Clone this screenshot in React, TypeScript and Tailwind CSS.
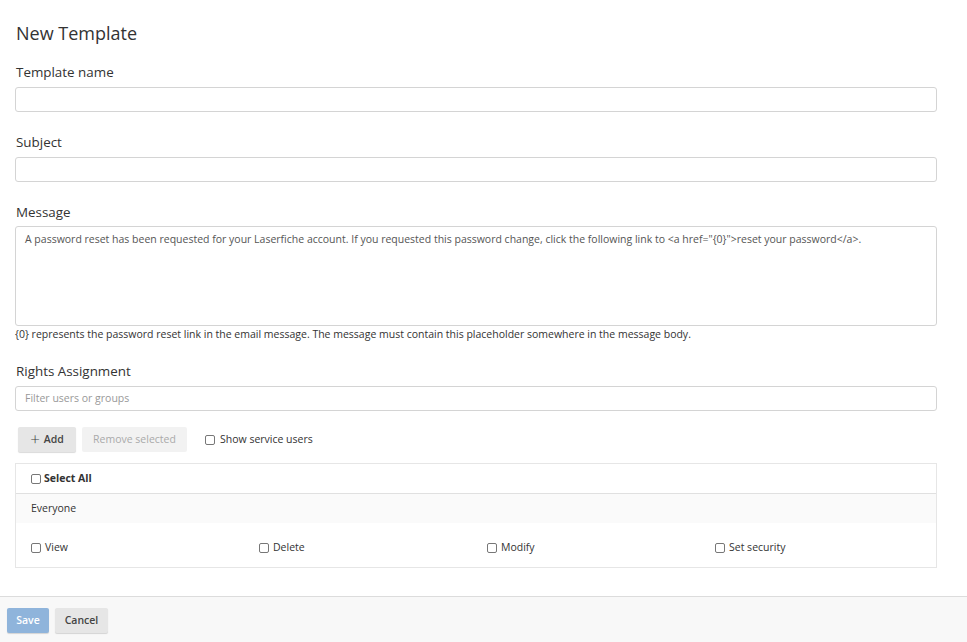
import React from "react";

const font = { fontFamily: '"Open Sans", "Noto Sans", sans-serif' };

function Cb({ className = "" }: { className?: string }) {
  return (
    <span
      className={
        "inline-block w-[10px] h-[10px] rounded-[2px] border border-[#777] bg-white shrink-0 " +
        className
      }
    />
  );
}

export default function App() {
  return (
    <div className="w-[967px] h-[642px] bg-white text-[#333] flex flex-col overflow-hidden" style={font}>
      <div className="flex-1 pl-[15px] pr-[30px]">
        <h1 className="text-[18px] leading-[24px] pt-[21px] pl-[1px] font-normal">New Template</h1>

        <div className="mt-[17px]">
          <div className="text-[13.4px] leading-[20px] pl-[1px]">Template name</div>
          <div className="mt-[5px] h-[25px] border border-[#d4d4d4] rounded-[3px] bg-white" />
        </div>

        <div className="mt-[20px]">
          <div className="text-[13.4px] leading-[20px] pl-[1px]">Subject</div>
          <div className="mt-[5px] h-[25px] border border-[#d4d4d4] rounded-[3px] bg-white" />
        </div>

        <div className="mt-[20px]">
          <div className="text-[13.4px] leading-[20px] pl-[1px]">Message</div>
          <div className="mt-[4px] h-[100px] border border-[#d4d4d4] rounded-[3px] bg-white px-[9px] pt-[4px] text-[10.5px] leading-[16px] text-[#555]">
            A password reset has been requested for your Laserfiche account. If you requested this password change, click the following link to &lt;a href="{"{0}"}"&gt;reset your password&lt;/a&gt;.
          </div>
          <div className="mt-[1px] text-[10.5px] leading-[15px] text-[#333]">
            {"{0}"} represents the password reset link in the email message. The message must contain this placeholder somewhere in the message body.
          </div>
        </div>

        <div className="mt-[19px]">
          <div className="text-[13.4px] leading-[20px] pl-[1px]">Rights Assignment</div>
          <div className="mt-[5px] h-[25px] border border-[#d4d4d4] rounded-[3px] bg-white px-[9px] flex items-center text-[10.5px] text-[#999]">
            Filter users or groups
          </div>
        </div>

        <div className="mt-[16px] flex items-center pl-[3px] gap-[6px] text-[10.5px]">
          <div className="h-[25px] w-[58px] bg-[#e6e6e6] rounded-[2px] shadow-[0_1px_1px_rgba(0,0,0,0.15)] flex items-center justify-center gap-[4px] text-[#444] font-semibold">
            <span className="text-[17px] font-light leading-none mt-[-2px]">+</span>
            <span>Add</span>
          </div>
          <div className="h-[25px] w-[105px] bg-[#f2f2f2] rounded-[2px] flex items-center justify-center text-[#aaa]">
            Remove selected
          </div>
          <div className="ml-[12px] flex items-center gap-[5px] text-[#333]">
            <Cb />
            <span>Show service users</span>
          </div>
        </div>

        <div className="mt-[11px] border border-[#e6e6e6] text-[10.5px]">
          <div className="h-[30px] flex items-center pl-[15px] gap-[3px] font-bold border-b border-[#e0e0e0]">
            <Cb />
            <span>Select All</span>
          </div>
          <div className="h-[29px] flex items-center pl-[15px] bg-[#fafafa]">Everyone</div>
          <div className="h-[44px] flex items-start pt-[17px] pl-[15px] leading-[15px]">
            {["View", "Delete", "Modify", "Set security"].map((l) => (
              <div key={l} className="w-[228px] shrink-0 flex items-center gap-[4px]">
                <Cb />
                <span>{l}</span>
              </div>
            ))}
          </div>
        </div>
      </div>

      <div className="h-[46px] border-t border-[#dcdcdc] bg-[#f8f8f8] flex items-start pt-[11px] pl-[7px] gap-[6px] text-[10.5px] font-semibold">
        <div className="h-[25px] w-[42px] rounded-[2px] bg-[#8fb4db] text-white flex items-center justify-center shadow-[0_1px_1px_rgba(0,0,0,0.15)]">
          Save
        </div>
        <div className="h-[25px] w-[53px] rounded-[2px] bg-[#e6e6e6] text-[#444] flex items-center justify-center shadow-[0_1px_1px_rgba(0,0,0,0.15)]">
          Cancel
        </div>
      </div>
    </div>
  );
}
